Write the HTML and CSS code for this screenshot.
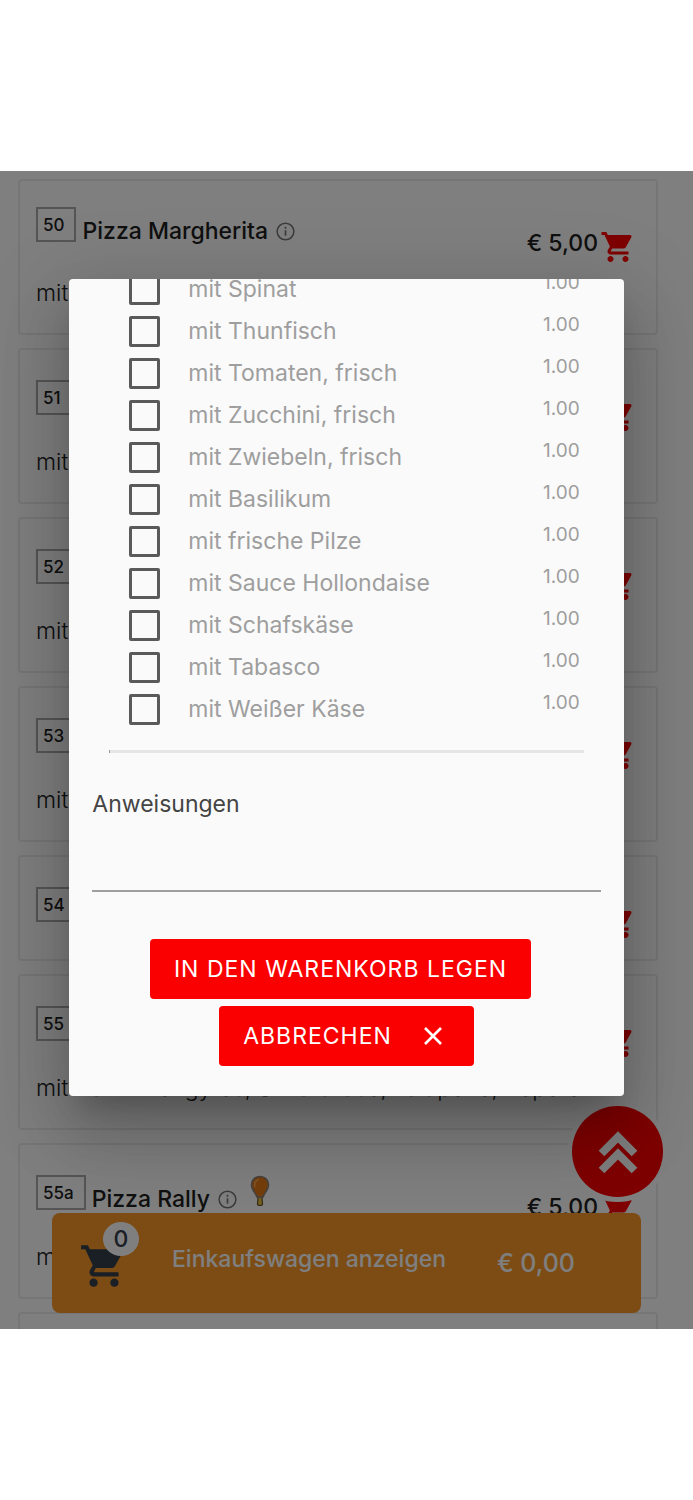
FILE: index.html
```html
<!DOCTYPE html>
<html lang="de">
<head>
<meta charset="utf-8">
<meta name="viewport" content="width=device-width, initial-scale=1">
<title>Pizza bestellen</title>
<link rel="stylesheet" href="styles.css">
</head>
<body>
<svg class="defs" aria-hidden="true">
  <symbol id="cart" viewBox="0 0 24 24"><path d="M7 18c-1.1 0-1.99.9-1.99 2S5.900 22 7 22s2-.9 2-2-.9-2-2-2zM1 2v2h2l3.600 7.590-1.350 2.450c-.16.28-.25.61-.25.96 0 1.100.9 2 2 2h12v-2H7.420c-.14 0-.25-.11-.25-.25l.03-.12.9-1.630h7.450c.75 0 1.410-.41 1.750-1.030l3.580-6.490c.08-.14.12-.31.12-.48 0-.55-.45-1-1-1H5.210l-.94-2H1zm16 16c-1.100 0-1.990.9-1.990 2s.89 2 1.990 2 2-.9 2-2-.9-2-2-2z"/></symbol>
  <symbol id="info" viewBox="0 0 20 20"><circle cx="10" cy="10" r="8.800" fill="none" stroke="currentColor" stroke-width="1.600"/><path d="M9.100 5h1.800v2H9.100zM9.100 8.600h1.800v6H9.100z"/></symbol>
</svg>

<main class="screen">
  <section class="menu">
    <article class="card">
      <header class="card-head">
        <div class="title"><span class="num">50</span><h2>Pizza Margherita</h2><svg class="info"><use href="#info"/></svg></div>
        <div class="buy"><span class="price">€ 5,00</span><button class="add" aria-label="Pizza Margherita hinzufügen"><svg><use href="#cart"/></svg></button></div>
      </header>
      <p class="desc">mit</p>
    </article>
    <article class="card">
      <header class="card-head">
        <div class="title title-marked"><span class="num">51</span></div>
        <div class="buy"><button class="add" aria-label="51 hinzufügen"><svg><use href="#cart"/></svg></button></div>
      </header>
      <p class="desc">mit</p>
    </article>
    <article class="card">
      <header class="card-head">
        <div class="title title-marked"><span class="num">52</span></div>
        <div class="buy"><button class="add" aria-label="52 hinzufügen"><svg><use href="#cart"/></svg></button></div>
      </header>
      <p class="desc">mit</p>
    </article>
    <article class="card">
      <header class="card-head">
        <div class="title title-marked"><span class="num">53</span></div>
        <div class="buy"><button class="add" aria-label="53 hinzufügen"><svg><use href="#cart"/></svg></button></div>
      </header>
      <p class="desc">mit</p>
    </article>
    <article class="card">
      <header class="card-head">
        <div class="title title-marked"><span class="num">54</span></div>
        <div class="buy"><button class="add" aria-label="54 hinzufügen"><svg><use href="#cart"/></svg></button></div>
      </header>
    </article>
    <article class="card">
      <header class="card-head">
        <div class="title title-marked"><span class="num">55</span></div>
        <div class="buy"><button class="add" aria-label="55 hinzufügen"><svg><use href="#cart"/></svg></button></div>
      </header>
      <p class="desc">mit Hähnchengyros, Schafskäse, Jalapeno, Peperoni</p>
    </article>
    <article class="card">
      <header class="card-head">
        <div class="title title-marked"><span class="num">55a</span><h2>Pizza Rally</h2><svg class="info"><use href="#info"/></svg>
          <svg class="mark" viewBox="0 0 20 32"><path d="M7 19h6l-1 4 .5 5.500q.5 2-2.500 2t-2.500-2L8 23z" fill="#e8c040" stroke="#6b5530" stroke-width="1.200"/><path d="M10 1.500c-5 0-8.500 3.500-8.500 8.200 0 5 4 8 5.500 12.300h6c1.500-4.300 5.500-7.300 5.500-12.300 0-4.700-3.500-8.200-8.500-8.200z" fill="#e87a18" stroke="#8c8780" stroke-width="1.600"/><path d="M5 12c-1-4 1-7 4-7.500" fill="none" stroke="#ffad50" stroke-width="1.500"/></svg>
        </div>
        <div class="buy"><span class="price">€ 5,00</span><button class="add" aria-label="Pizza Rally hinzufügen"><svg><use href="#cart"/></svg></button></div>
      </header>
      <p class="desc">mit</p>
    </article>
    <article class="card"><header class="card-head"></header></article>
  </section>

  <button class="to-top" aria-label="Nach oben"><svg viewBox="0 0 40 44"><path d="M3.500 23.500 20 7l16.500 16.500M3.500 40.500 20 24l16.500 16.500" fill="none" stroke="#fff" stroke-width="8"/></svg></button>

  <button class="cart-bar">
    <span class="cart-icon"><svg><use href="#cart"/></svg><span class="count">0</span></span>
    <span class="cart-label">Einkaufswagen anzeigen</span>
    <span class="cart-total">€ 0,00</span>
  </button>

  <div class="overlay">
    <form class="dialog" role="dialog" aria-label="Extras">
      <ul class="extras">
        <li><label><input type="checkbox"><span>mit Spinat</span><small>1.00</small></label></li>
        <li><label><input type="checkbox"><span>mit Thunfisch</span><small>1.00</small></label></li>
        <li><label><input type="checkbox"><span>mit Tomaten, frisch</span><small>1.00</small></label></li>
        <li><label><input type="checkbox"><span>mit Zucchini, frisch</span><small>1.00</small></label></li>
        <li><label><input type="checkbox"><span>mit Zwiebeln, frisch</span><small>1.00</small></label></li>
        <li><label><input type="checkbox"><span>mit Basilikum</span><small>1.00</small></label></li>
        <li><label><input type="checkbox"><span>mit frische Pilze</span><small>1.00</small></label></li>
        <li><label><input type="checkbox"><span>mit Sauce Hollondaise</span><small>1.00</small></label></li>
        <li><label><input type="checkbox"><span>mit Schafskäse</span><small>1.00</small></label></li>
        <li><label><input type="checkbox"><span>mit Tabasco</span><small>1.00</small></label></li>
        <li><label><input type="checkbox"><span>mit Weißer Käse</span><small>1.00</small></label></li>
      </ul>
      <hr>
      <div class="field">
        <label for="notes">Anweisungen</label>
        <input id="notes" type="text">
      </div>
      <div class="actions">
        <button type="button" class="btn btn-main">IN DEN WARENKORB LEGEN</button>
        <button type="button" class="btn">ABBRECHEN<svg viewBox="0 0 20 20"><path d="M2 2l16 16M18 2 2 18" stroke="currentColor" stroke-width="2.600"/></svg></button>
      </div>
    </form>
  </div>
</main>
</body>
</html>
```
FILE: styles.css
```css
* { box-sizing: border-box; }

body {
  margin: 0;
  padding: 171px 0;
  height: 100vh;
  display: flex;
  background: #fff;
  font-family: Inter, "Noto Sans", sans-serif;
  font-size: 23px;
  color: #212121;
}

button, input { font: inherit; }
button { border: 0; padding: 0; cursor: pointer; }
h2, p, ul { margin: 0; padding: 0; }
svg { display: block; fill: currentColor; }
.defs { display: none; }

.screen {
  position: relative;
  flex: 1;
  min-width: 0;
  overflow: hidden;
}

/* Menu list */
.menu {
  display: flex;
  flex-direction: column;
  gap: 13px;
  padding: 8px 35px 0 18px;
}

.card {
  border: 2px solid #ececec;
  border-radius: 4px;
  padding: 26px 20px 25px 16px;
}

.card-head {
  display: flex;
  justify-content: space-between;
  height: 51px;
}

.title { display: flex; align-items: flex-start; }
.title-marked { margin-top: 4px; }

.num {
  height: 35px;
  padding: 0 10px 0 5px;
  border: 2px solid #aaa;
  font-size: 17px;
  font-weight: 500;
  line-height: 32px;
}

.title h2 {
  margin-left: 6px;
  font-size: 23px;
  font-weight: 500;
  line-height: 48px;
}

.info {
  width: 19px;
  height: 19px;
  margin: 15px 0 0 8px;
  color: #777;
}

.mark { width: 20px; height: 32px; margin-left: 13px; }

.buy { display: flex; margin-left: auto; padding-top: 22px; }
.price { font-weight: 500; line-height: 29px; }
.add { align-self: flex-start; margin-left: 2px; background: none; color: #f00; }
.add svg { width: 36px; height: 36px; }

.desc {
  margin-top: 20px;
  font-weight: 300;
  line-height: 30px;
  white-space: nowrap;
}

/* Floating controls */
.to-top {
  position: absolute;
  right: 30px;
  bottom: 132px;
  width: 91px;
  height: 91px;
  border-radius: 50%;
  background: #f00;
  box-shadow: 0 0 0 5px #fff;
  display: grid;
  place-items: center;
}
.to-top svg { width: 40px; height: 44px; }

.cart-bar {
  position: absolute;
  left: 52px;
  right: 52px;
  bottom: 16px;
  height: 100px;
  padding: 0 66px 0 27px;
  border-radius: 8px;
  background: #f89828;
  color: #fff;
  display: flex;
  align-items: center;
  font-weight: 500;
}
.cart-icon { position: relative; color: #353f4c; }
.cart-icon > svg { width: 50px; height: 50px; margin-top: 6px; }
.count {
  position: absolute;
  left: 24px;
  top: -13px;
  width: 36px;
  height: 34px;
  border-radius: 50%;
  background: #fff;
  line-height: 34px;
}
.cart-label { margin: -8px auto 0 43px; }
.cart-total { font-size: 25px; }

/* Dialog */
.overlay {
  position: absolute;
  inset: 0;
  padding-top: 108px;
  background: rgba(0, 0, 0, .5);
  display: flex;
  justify-content: center;
  align-items: flex-start;
}

.dialog {
  width: 80%;
  overflow: hidden;
  padding-bottom: 30px;
  border-radius: 4px;
  background: #fafafa;
  box-shadow: 0 20px 27px -12px rgba(0, 0, 0, .2), 0 43px 67px 5px rgba(0, 0, 0, .14), 0 16px 81px 14px rgba(0, 0, 0, .12);
}

.extras {
  margin-top: -11px;
  padding: 0 44px 0 60px;
  list-style: none;
  color: #9e9e9e;
}
.extras label {
  display: flex;
  align-items: center;
  height: 42px;
}
.extras input {
  appearance: none;
  width: 31px;
  height: 31px;
  margin: 0 28px 0 0;
  border: 3px solid #5a5a5a;
  border-radius: 2px;
}
.extras small {
  margin-left: auto;
  padding-bottom: 12px;
  font-size: 19px;
  line-height: 28px;
}

hr {
  height: 3px;
  margin: 20px 40px 0;
  border: 0;
  border-left: 1px solid #999;
  background: #e4e5e4;
}

.field {
  display: flex;
  flex-direction: column;
  margin: 36px 23px 0;
}
.field label { line-height: 30px; color: #444; }
.field input {
  height: 73px;
  padding: 0;
  border: 0;
  border-bottom: 2px solid #9e9e9e;
  background: none;
  outline: 0;
}

.actions {
  display: flex;
  flex-direction: column;
  align-items: center;
  gap: 7px;
  margin-top: 47px;
}
.btn {
  display: flex;
  align-items: center;
  height: 60px;
  padding: 0 24px;
  border-radius: 4px;
  background: #fb0000;
  color: #fff;
  letter-spacing: 1px;
}
.btn-main { margin-right: 12px; }
.btn svg { width: 20px; height: 20px; margin: 0 7px 0 31px; }
```
